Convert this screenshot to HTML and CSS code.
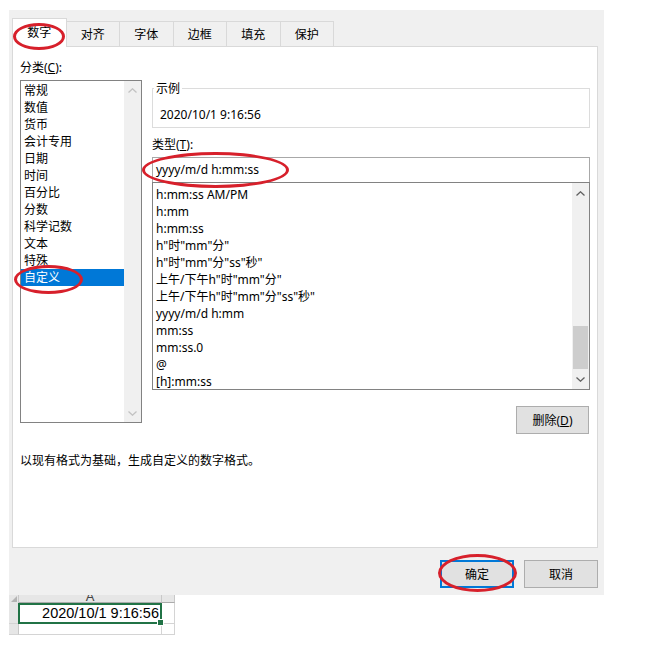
FILE: index.html
```html
<!DOCTYPE html>
<html lang="zh-CN">

<head>
    <meta charset="UTF-8">
    <title>设置单元格格式</title>
    <link rel="stylesheet" href="styles.css">
</head>

<body>
    <div class="dialog">
        <div class="tabs">
            <div class="tab active">数字</div>
            <div class="tab">对齐</div>
            <div class="tab">字体</div>
            <div class="tab">边框</div>
            <div class="tab">填充</div>
            <div class="tab">保护</div>
        </div>

        <div class="panel">
            <div class="cols">
                <div class="col-left">
                    <div class="label">分类(<u>C</u>):</div>
                    <div class="listbox cat">
                        <ul class="items">
                            <li>常规</li>
                            <li>数值</li>
                            <li>货币</li>
                            <li>会计专用</li>
                            <li>日期</li>
                            <li>时间</li>
                            <li>百分比</li>
                            <li>分数</li>
                            <li>科学记数</li>
                            <li>文本</li>
                            <li>特殊</li>
                            <li class="sel">自定义</li>
                        </ul>
                        <div class="vscroll off">
                            <span class="arrow"><svg width="9" height="5" viewBox="0 0 9 5"><path d="M0.5 4.5 L4.5 0.8 L8.5 4.5" /></svg></span>
                            <span class="track"></span>
                            <span class="arrow"><svg width="9" height="5" viewBox="0 0 9 5"><path d="M0.5 0.5 L4.5 4.2 L8.5 0.5" /></svg></span>
                        </div>
                    </div>
                </div>

                <div class="col-right">
                    <fieldset class="sample">
                        <legend>示例</legend>
                        <div class="sample-value">2020/10/1 9:16:56</div>
                    </fieldset>
                    <div class="label type-label">类型(<u>T</u>):</div>
                    <div class="typebox">yyyy/m/d h:mm:ss</div>
                    <div class="listbox fmt">
                        <ul class="items">
                            <li>h:mm:ss AM/PM</li>
                            <li>h:mm</li>
                            <li>h:mm:ss</li>
                            <li>h"时"mm"分"</li>
                            <li>h"时"mm"分"ss"秒"</li>
                            <li>上午/下午h"时"mm"分"</li>
                            <li>上午/下午h"时"mm"分"ss"秒"</li>
                            <li>yyyy/m/d h:mm</li>
                            <li>mm:ss</li>
                            <li>mm:ss.0</li>
                            <li>@</li>
                            <li>[h]:mm:ss</li>
                        </ul>
                        <div class="vscroll">
                            <span class="arrow"><svg width="9" height="5" viewBox="0 0 9 5"><path d="M0.5 4.5 L4.5 0.8 L8.5 4.5" /></svg></span>
                            <span class="track"><span class="thumb"></span></span>
                            <span class="arrow"><svg width="9" height="5" viewBox="0 0 9 5"><path d="M0.5 0.5 L4.5 4.2 L8.5 0.5" /></svg></span>
                        </div>
                    </div>
                    <div class="actions">
                        <button class="btn">删除(<u>D</u>)</button>
                    </div>
                </div>
            </div>
            <p class="desc">以现有格式为基础，生成自定义的数字格式。</p>
        </div>

        <div class="footer">
            <button class="btn primary">确定</button>
            <button class="btn">取消</button>
        </div>
    </div>

    <div class="sheet">
        <div class="corner"></div>
        <div class="colhead"><span>A</span></div>
        <div class="colhead"></div>
        <div class="rowhead"></div>
        <div class="cell active">2020/10/1 9:16:56<span class="handle"></span></div>
        <div class="cell"></div>
        <div class="rowhead"></div>
        <div class="cell"></div>
        <div class="cell"></div>
    </div>

    <!-- red marker circles drawn over the screenshot -->
    <div class="mark m-tab"></div>
    <div class="mark m-custom"></div>
    <div class="mark m-type"></div>
    <div class="mark m-ok"></div>
</body>

</html>
```

FILE: styles.css
```css
body {
    margin: 0;
    background: #fff;
    font-family: "Noto Sans", "Noto Sans CJK SC", sans-serif;
    font-size: 12px;
    line-height: 17px;
    color: #000;
}

.dialog {
    box-sizing: border-box;
    margin: 10px 0 0 9px;
    width: 595px;
    height: 585px;
    padding: 8px 6px 0 3px;
    background: #f0f0f0;
}

/* tabs */
.tabs {
    display: flex;
    align-items: flex-end;
    height: 28px;
}

.tab {
    box-sizing: border-box;
    width: 54.5px;
    height: 25px;
    margin-right: -1px;
    border: 1px solid #d9d9d9;
    border-bottom: none;
    background: #f0f0f0;
    display: flex;
    align-items: center;
    justify-content: center;
}

.tab.active {
    height: 29px;
    margin-bottom: -1px;
    background: #fff;
    position: relative;
    z-index: 1;
    padding-bottom: 1px;
}

/* main panel */
.panel {
    box-sizing: border-box;
    height: 502px;
    border: 1px solid #d9d9d9;
    background: #fff;
    padding: 12px 7px 0 7px;
}

.cols {
    display: flex;
    gap: 10px;
}

.col-left {
    width: 122px;
}

.col-right {
    flex: 1;
    padding-top: 21px;
}

.label {
    height: 17px;
}

.listbox {
    box-sizing: border-box;
    display: flex;
    border: 1px solid #828282;
    background: #fff;
    overflow: hidden;
}

.listbox.cat {
    margin-top: 4px;
    height: 343px;
}

.items {
    flex: 1;
    list-style: none;
    margin: 0;
    padding: 1px 0 0;
}

.items li {
    height: 17px;
    padding-left: 3px;
    white-space: nowrap;
}

.items li.sel {
    background: #0078d7;
    color: #fff;
}

.vscroll {
    width: 17px;
    display: flex;
    flex-direction: column;
    background: #f0f0f0;
    color: #606060;
}

.vscroll.off {
    color: #c2c2c2;
}

.vscroll .arrow {
    height: 18px;
    display: flex;
    align-items: center;
    justify-content: center;
}

.vscroll svg path {
    fill: none;
    stroke: currentColor;
    stroke-width: 1.3;
}

.vscroll .track {
    flex: 1;
    display: flex;
    flex-direction: column;
    justify-content: flex-end;
    padding: 0 1px;
}

.thumb {
    height: 43px;
    background: #cdcdcd;
}

/* sample group */
.sample {
    margin: 0;
    padding: 0 0 4px 7px;
    border: 1px solid #dcdcdc;
    min-width: 0;
}

.sample legend {
    padding: 0 2px;
    margin-left: -6px;
    line-height: 17px;
}

.sample-value {
    margin-top: 9px;
}

.type-label {
    margin-top: 8px;
}

.typebox {
    box-sizing: border-box;
    margin-top: 4px;
    height: 25px;
    border: 1px solid #a8a8a8;
    border-bottom: none;
    padding: 3px 0 0 3px;
}

.listbox.fmt {
    height: 208px;
}

.listbox.fmt .items {
    padding-top: 3px;
}

.listbox.fmt .vscroll .arrow {
    height: 20px;
}

.actions {
    display: flex;
    justify-content: flex-end;
    margin-top: 16px;
    padding-right: 1px;
}

.btn {
    box-sizing: border-box;
    height: 28px;
    width: 73px;
    border: 1px solid #adadad;
    background: #e1e1e1;
    font-family: inherit;
    font-size: 12px;
    color: #000;
    padding: 0;
}

.btn.primary {
    border: 2px solid #0078d7;
}

.desc {
    margin: 18px 0 0;
}

.footer {
    display: flex;
    justify-content: flex-end;
    gap: 10px;
    margin-top: 12px;
}

.footer .btn {
    width: 74px;
}

/* excel cell underneath */
.sheet {
    margin-left: 9px;
    width: 166px;
    height: 40px;
    display: grid;
    grid-template-columns: 10px 143px 13px;
    grid-template-rows: 8px 21px 11px;
    overflow: hidden;
    font-family: "Liberation Sans", sans-serif;
}

.corner {
    background: #e6e6e6;
    border-right: 1px solid #c8c8c8;
    position: relative;
}

.corner::after {
    content: '';
    position: absolute;
    right: 1px;
    bottom: 1px;
    border-left: 6px solid transparent;
    border-bottom: 6px solid #b4b4b4;
}

.colhead {
    background: #e6e6e6;
    border-right: 1px solid #c8c8c8;
    border-bottom: 1px solid #ababab;
    overflow: hidden;
    text-align: center;
    font-size: 13px;
    color: #444;
}

.colhead span {
    display: block;
    line-height: 16px;
    margin-top: -6px;
}

.rowhead {
    background: #e6e6e6;
    border-right: 1px solid #c8c8c8;
    border-bottom: 1px solid #d4d4d4;
}

.cell {
    border-right: 1px solid #d4d4d4;
    border-bottom: 1px solid #d4d4d4;
}

.cell.active {
    box-sizing: border-box;
    border: 2px solid #217346;
    margin-left: -1px;
    position: relative;
    text-align: right;
    font-size: 14.5px;
    line-height: 17px;
    padding-right: 1px;
}

.handle {
    position: absolute;
    right: -4px;
    bottom: -4px;
    width: 5px;
    height: 5px;
    background: #217346;
    border: 1px solid #fff;
}

/* hand-drawn red rings */
.mark {
    position: absolute;
    box-sizing: border-box;
    border: 3px solid #d7202b;
    border-radius: 50%;
    z-index: 5;
}

.m-tab {
    left: 13px;
    top: 23px;
    width: 52px;
    height: 27px;
}

.m-custom {
    left: 14px;
    top: 265px;
    width: 69px;
    height: 29px;
}

.m-type {
    left: 142px;
    top: 152px;
    width: 147px;
    height: 36px;
}

.m-ok {
    left: 438px;
    top: 554px;
    width: 79px;
    height: 38px;
}
```
